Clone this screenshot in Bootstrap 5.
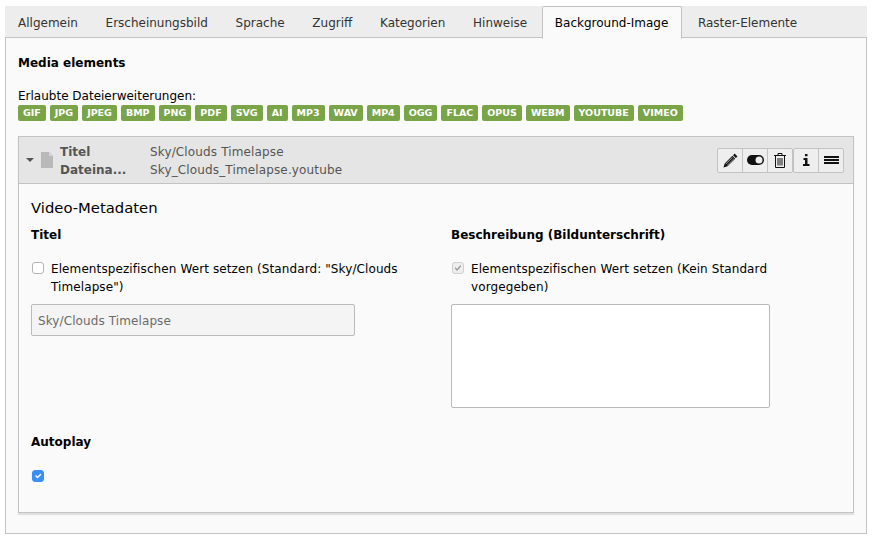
<!DOCTYPE html>
<html lang="de">
<head>
    <meta charset="UTF-8">
    <meta name="viewport" content="width=device-width, initial-scale=1.0">
    <title>Background-Image</title>
    <link href="https://cdn.jsdelivr.net/npm/bootstrap@5.3.0/dist/css/bootstrap.min.css" rel="stylesheet">
    <style>
        body {
            background: #fff;
            color: #000;
            font-family: "DejaVu Sans", Verdana, sans-serif;
            font-size: 12px;
            line-height: 18px;
            padding: 6px 6px 0 5px;
        }
        .tab-strip {
            background: #ededed;
            border-bottom: 1px solid #c3c3c3;
            height: 32px;
            gap: 0;
        }
        .tab-strip .nav-link {
            color: #333;
            font-size: 12px;
            line-height: 18px;
            padding: 7px 13.7px 6px 12px;
            border: 1px solid transparent;
            border-radius: 2px 2px 0 0;
            margin-bottom: -1px;
        }
        .tab-strip .nav-link.active {
            background: #fafafa;
            color: #000;
            border-color: #c3c3c3 #c3c3c3 #fafafa;
            padding-right: 12.5px;
        }
        .tab-strip .nav-item:last-child { margin-left: 3px; }
        .tab-body {
            background: #fafafa;
            border: 1px solid #c3c3c3;
            border-top: 0;
            padding: 16px 12px 20px;
            height: 496px;
        }
        .sect-title {
            font-weight: 700;
            margin: 0 0 15px;
        }
        .ext-list {
            gap: 4px;
            margin: 0 0 15px;
        }
        .ext-tag {
            background: #79a548;
            color: #fff;
            font-size: 9.5px;
            font-weight: 700;
            line-height: 16px;
            height: 16px;
            padding: 0 5px;
            border-radius: 2px;
        }
        .media-item {
            border: 1px solid #c3c3c3;
            box-shadow: 0 2px 1px rgba(0, 0, 0, .1);
            height: 377px;
        }
        .item-head {
            background: #e5e5e5;
            border-bottom: 1px solid #c3c3c3;
            color: #555;
            height: 47px;
            padding: 0 9px 0 7px;
        }
        .item-caret {
            width: 0;
            height: 0;
            border: 4px solid transparent;
            border-top-color: #555;
            border-bottom: 0;
            margin-right: 7px;
        }
        .item-labels {
            width: 97px;
            padding-left: 7px;
            font-weight: 700;
        }
        .item-text { padding-top: 2px; }
        .item-values { letter-spacing: .14px; }
        .item-btn {
            width: 26px;
            height: 25px;
            padding: 0;
            background: #eee;
            border: 1px solid #c3c3c3;
            border-radius: 2px;
            display: inline-flex;
            align-items: center;
            justify-content: center;
        }
        .item-btn:hover { background: #eee; border-color: #c3c3c3; }
        .item-content {
            padding: 14px 12px 0;
        }
        .meta-title {
            font-size: 14.8px;
            line-height: 20px;
            font-weight: 400;
            margin: 0 0 8px;
        }
        .meta-row { --bs-gutter-x: 30px; }
        .field-label {
            font-weight: 700;
            margin: 0 0 16px;
        }
        .check-line {
            min-height: 0;
            padding-left: 20px;
            margin: 0 0 8px;
        }
        .check-line .form-check-input {
            width: 12px;
            height: 12px;
            margin: 2px 0 0 -19px;
            border: 1px solid #b5b5b5;
            border-radius: 3px;
            background-color: #fff;
        }
        .check-line .form-check-input:disabled { opacity: 1; }
        .check-line .form-check-input.off-tick {
            background-color: #eee;
            border-color: #d0d0d0;
            background-image: url("data:image/svg+xml,%3csvg xmlns='http://www.w3.org/2000/svg' viewBox='0 0 20 20'%3e%3cpath fill='none' stroke='%23999' stroke-linecap='round' stroke-linejoin='round' stroke-width='2.5' d='m5 10 3 4 7-8'/%3e%3c/svg%3e");
        }
        .check-line .form-check-input.on-tick {
            background-color: #3a8ff6;
            border-color: #3a8ff6;
        }
        .check-line .form-check-label { opacity: 1 !important; color: #000; letter-spacing: .1px; }
        .value-input {
            width: 324px;
            height: 32px;
            background: #f4f4f4;
            border: 1px solid #bbb;
            border-radius: 2px;
            color: #6b6b6b;
            font-size: 12px;
            letter-spacing: .1px;
            padding: 7px 6px 5px;
        }
        .value-input:disabled { background: #f4f4f4; }
        .value-area {
            width: 319px;
            height: 104px;
            border: 1px solid #bbb;
            border-radius: 2px;
            background: #fff;
            box-shadow: none;
            resize: none;
        }
        .auto-block { margin-top: 25px; }
        .auto-block .field-label { margin-bottom: 17px; }
    </style>
</head>
<body>

<ul class="nav tab-strip">
    <li class="nav-item"><a class="nav-link" href="#">Allgemein</a></li>
    <li class="nav-item"><a class="nav-link" href="#">Erscheinungsbild</a></li>
    <li class="nav-item"><a class="nav-link" href="#">Sprache</a></li>
    <li class="nav-item"><a class="nav-link" href="#">Zugriff</a></li>
    <li class="nav-item"><a class="nav-link" href="#">Kategorien</a></li>
    <li class="nav-item"><a class="nav-link" href="#">Hinweise</a></li>
    <li class="nav-item"><a class="nav-link active" href="#">Background-Image</a></li>
    <li class="nav-item"><a class="nav-link" href="#">Raster-Elemente</a></li>
</ul>

<div class="tab-body">
    <p class="sect-title">Media elements</p>
    <div>Erlaubte Dateierweiterungen:</div>
    <div class="d-flex ext-list">
        <span class="ext-tag">GIF</span>
        <span class="ext-tag">JPG</span>
        <span class="ext-tag">JPEG</span>
        <span class="ext-tag">BMP</span>
        <span class="ext-tag">PNG</span>
        <span class="ext-tag">PDF</span>
        <span class="ext-tag">SVG</span>
        <span class="ext-tag">AI</span>
        <span class="ext-tag">MP3</span>
        <span class="ext-tag">WAV</span>
        <span class="ext-tag">MP4</span>
        <span class="ext-tag">OGG</span>
        <span class="ext-tag">FLAC</span>
        <span class="ext-tag">OPUS</span>
        <span class="ext-tag">WEBM</span>
        <span class="ext-tag">YOUTUBE</span>
        <span class="ext-tag">VIMEO</span>
    </div>

    <div class="media-item">
        <div class="item-head d-flex align-items-center">
            <span class="item-caret"></span>
            <svg width="12" height="16" viewBox="0 0 12 16"><path fill="#b9b9b9" d="M0 0h8l4 4v12H0z"/><path fill="#d4d4d4" d="M8 0l4 4H8z"/></svg>
            <div class="item-labels item-text">
                <div>Titel</div>
                <div>Dateina...</div>
            </div>
            <div class="flex-grow-1 item-text item-values">
                <div>Sky/Clouds Timelapse</div>
                <div>Sky_Clouds_Timelapse.youtube</div>
            </div>
            <div class="btn-group">
                <button class="btn item-btn" type="button" aria-label="Bearbeiten">
                    <svg width="15" height="15" viewBox="0 0 16 16"><path fill="#111" d="M12.400 .6l3 3-1.700 1.700-3-3zM10 3l3 3-8.200 8.200-4.300 1.300 1.300-4.300z"/><path fill="#eee" d="M2.600 11.600L9.800 4.400l.5.500L3.100 12.100zM4.300 13l7.200-7.200.4.400-7.200 7.200z"/></svg>
                </button>
                <button class="btn item-btn" type="button" aria-label="Ausblenden">
                    <svg width="17" height="10" viewBox="0 0 17 10"><rect width="17" height="10" rx="5" fill="#111"/><circle cx="12" cy="5" r="3.500" fill="#eee"/></svg>
                </button>
                <button class="btn item-btn" type="button" aria-label="Löschen">
                    <svg width="12" height="15" viewBox="0 0 12 15"><path fill="none" stroke="#111" d="M0 2.500h12M4 2.500V.5h4v2M1.500 2.500v12h9v-12M4 5v7.500M6 5v7.500M8 5v7.500"/></svg>
                </button>
            </div>
            <div class="btn-group">
                <button class="btn item-btn" type="button" aria-label="Info">
                    <svg width="7" height="12" viewBox="0 0 7 12"><path fill="#111" d="M2 0h2.500v2.300H2zM.5 4h4v6h2v2H0v-2h2V6H.5z"/></svg>
                </button>
                <button class="btn item-btn" type="button" aria-label="Sortieren">
                    <svg width="15" height="8" viewBox="0 0 15 8"><path fill="#111" d="M0 0h15v2H0zM0 3h15v2H0zM0 6h15v2H0z"/></svg>
                </button>
            </div>
        </div>
        <div class="item-content">
            <h4 class="meta-title">Video-Metadaten</h4>
            <div class="row meta-row">
                <div class="col-6">
                    <p class="field-label">Titel</p>
                    <div class="form-check check-line">
                        <input class="form-check-input" type="checkbox" id="ovr-title">
                        <label class="form-check-label" for="ovr-title">Elementspezifischen Wert setzen (Standard: "Sky/Clouds Timelapse")</label>
                    </div>
                    <input class="form-control value-input" type="text" value="Sky/Clouds Timelapse" disabled>
                </div>
                <div class="col-6">
                    <p class="field-label">Beschreibung (Bildunterschrift)</p>
                    <div class="form-check check-line">
                        <input class="form-check-input off-tick" type="checkbox" id="ovr-desc" checked disabled>
                        <label class="form-check-label" for="ovr-desc">Elementspezifischen Wert setzen (Kein Standard vorgegeben)</label>
                    </div>
                    <textarea class="form-control value-area"></textarea>
                </div>
            </div>
            <div class="auto-block">
                <p class="field-label">Autoplay</p>
                <div class="form-check check-line">
                    <input class="form-check-input on-tick" type="checkbox" id="autoplay" checked>
                </div>
            </div>
        </div>
    </div>
</div>

<script src="https://cdn.jsdelivr.net/npm/bootstrap@5.3.0/dist/js/bootstrap.bundle.min.js"></script>
</body>
</html>
